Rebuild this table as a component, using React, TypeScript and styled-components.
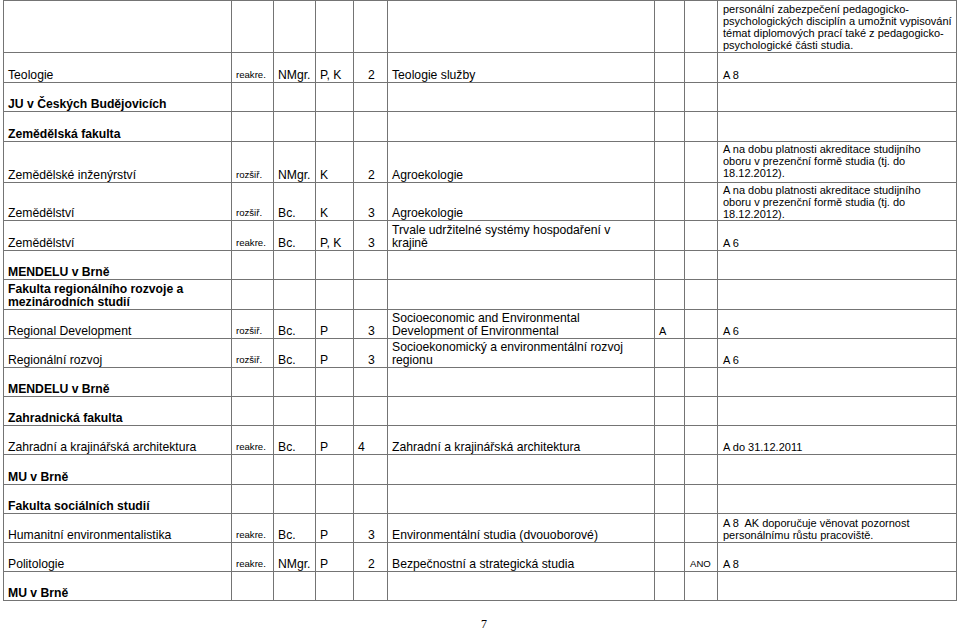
import React from "react";
import styled, { createGlobalStyle } from "styled-components";

const GlobalStyle = createGlobalStyle`
  html, body {
    margin: 0;
    padding: 0;
    background: #ffffff;
  }
  body {
    font-family: "Liberation Sans", Arial, sans-serif;
    color: #000;
  }
`;

const Page = styled.div`
  width: 960px;
  height: 632px;
  overflow: hidden;
  display: flex;
  flex-direction: column;
  padding-left: 3px;
  box-sizing: border-box;
`;

const Table = styled.table`
  border-collapse: collapse;
  table-layout: fixed;
  width: 953px;
  flex-shrink: 0;
`;

const Row = styled.tr<{ $h: number }>`
  height: ${(p) => p.$h}px;
`;

type Kind = "main" | "small" | "note" | "bold";

const sizes: Record<Kind, string> = {
  main: "font-size: 12.2px; line-height: 12.4px;",
  bold: "font-size: 12.2px; line-height: 12.4px; font-weight: 700;",
  small: "font-size: 9.6px; line-height: 12.4px;",
  note: "font-size: 11px; line-height: 12px;",
};

const Cell = styled.td<{
  $kind: Kind;
  $align: "left" | "center";
  $valign: "top" | "bottom";
  $padL: number;
}>`
  border: 1px solid #747474;
  padding: ${(p) => (p.$valign === "top" ? "1px" : "0")} 2px
    ${(p) => (p.$valign === "bottom" ? "1px" : "0")} ${(p) => p.$padL}px;
  vertical-align: ${(p) => p.$valign};
  text-align: ${(p) => p.$align};
  white-space: pre;
  overflow: hidden;
  ${(p) => sizes[p.$kind]}
`;

const PageNumber = styled.div`
  width: 960px;
  margin-left: -3px;
  padding-left: 8px;
  box-sizing: border-box;
  text-align: center;
  margin-top: 17px;
  font-family: "Liberation Serif", "Times New Roman", serif;
  font-size: 12px;
  line-height: 12px;
  flex-shrink: 0;
`;

const colWidths = [228, 42, 42, 38, 34, 267, 30, 33, 239];
const colKinds: Kind[] = ["main", "small", "main", "main", "main", "main", "note", "small", "note"];
const colPad = [4, 4, 4, 4, 4, 4, 4, 5, 5];

type RowDef = {
  h: number;
  cells: string[];
  bold?: boolean;
  noteTop?: boolean;
  numLeft?: boolean;
};

const blank = (first: string): string[] => [first, "", "", "", "", "", "", "", ""];

const rows: RowDef[] = [
  {
    h: 52,
    cells: [
      "", "", "", "", "", "", "", "",
      "personální zabezpečení pedagogicko-\npsychologických disciplín a umožnit vypisování\ntémat diplomových prací také z pedagogicko-\npsychologické části studia.",
    ],
  },
  { h: 30, cells: ["Teologie", "reakre.", "NMgr.", "P, K", "2", "Teologie služby", "", "", "A 8"] },
  { h: 29, cells: blank("JU v Českých Budějovicích"), bold: true },
  { h: 30, cells: blank("Zemědělská fakulta"), bold: true },
  {
    h: 41,
    noteTop: true,
    cells: [
      "Zemědělské inženýrství", "rozšiř.", "NMgr.", "K", "2", "Agroekologie", "", "",
      "A na dobu platnosti akreditace studijního\noboru v prezenční formě studia (tj. do\n18.12.2012).",
    ],
  },
  {
    h: 35,
    noteTop: true,
    cells: [
      "Zemědělství", "rozšiř.", "Bc.", "K", "3", "Agroekologie", "", "",
      "A na dobu platnosti akreditace studijního\noboru v prezenční formě studia (tj. do\n18.12.2012).",
    ],
  },
  {
    h: 30,
    cells: [
      "Zemědělství", "reakre.", "Bc.", "P, K", "3",
      "Trvale udržitelné systémy hospodaření v\nkrajině", "", "", "A 6",
    ],
  },
  { h: 29, cells: blank("MENDELU v Brně"), bold: true },
  { h: 30, cells: blank("Fakulta regionálního rozvoje a\nmezinárodních studií"), bold: true },
  {
    h: 29,
    cells: [
      "Regional Development", "rozšiř.", "Bc.", "P", "3",
      "Socioeconomic and Environmental\nDevelopment of Environmental", "A", "", "A 6",
    ],
  },
  {
    h: 29,
    cells: [
      "Regionální rozvoj", "rozšiř.", "Bc.", "P", "3",
      "Socioekonomický a environmentální rozvoj\nregionu", "", "", "A 6",
    ],
  },
  { h: 29, cells: blank("MENDELU v Brně"), bold: true },
  { h: 29, cells: blank("Zahradnická fakulta"), bold: true },
  {
    h: 29,
    numLeft: true,
    cells: [
      "Zahradní a krajinářská architektura", "reakre.", "Bc.", "P", "4",
      "Zahradní a krajinářská architektura", "", "", "A do 31.12.2011",
    ],
  },
  { h: 30, cells: blank("MU v Brně"), bold: true },
  { h: 29, cells: blank("Fakulta sociálních studií"), bold: true },
  {
    h: 29,
    cells: [
      "Humanitní environmentalistika", "reakre.", "Bc.", "P", "3",
      "Environmentální studia (dvouoborové)", "", "",
      "A 8  AK doporučuje věnovat pozornost\npersonálnímu růstu pracoviště.",
    ],
  },
  {
    h: 29,
    cells: [
      "Politologie", "reakre.", "NMgr.", "P", "2",
      "Bezpečnostní a strategická studia", "", "ANO", "A 8",
    ],
  },
  { h: 29, cells: blank("MU v Brně"), bold: true },
];

export default function App() {
  return (
    <>
      <GlobalStyle />
      <Page>
        <Table>
          <colgroup>
            {colWidths.map((w, i) => (
              <col key={i} style={{ width: w }} />
            ))}
          </colgroup>
          <tbody>
            {rows.map((r, ri) => (
              <Row key={ri} $h={r.h}>
                {r.cells.map((c, ci) => {
                  let kind = colKinds[ci];
                  if (ci === 0 && r.bold) kind = "bold";
                  const align = ci === 4 && !r.numLeft ? "center" : "left";
                  const valign = ci === 8 && r.noteTop ? "top" : "bottom";
                  return (
                    <Cell key={ci} $kind={kind} $align={align} $valign={valign} $padL={colPad[ci]}>
                      {c}
                    </Cell>
                  );
                })}
              </Row>
            ))}
          </tbody>
        </Table>
        <PageNumber>7</PageNumber>
      </Page>
    </>
  );
}
